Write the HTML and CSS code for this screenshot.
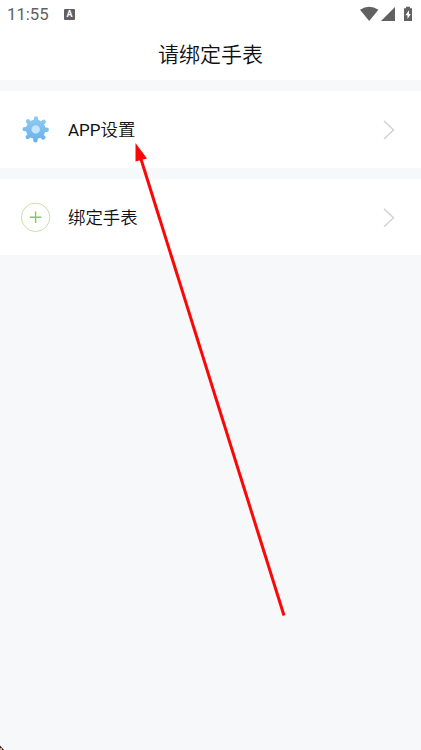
FILE: index.html
```html
<!DOCTYPE html>
<html lang="zh-CN">
<head>
<meta charset="utf-8">
<title>请绑定手表</title>
<link rel="stylesheet" href="styles.css">
</head>
<body>
<header class="header">
  <div class="status">
    <span class="time">11:55</span>
    <span class="badge">A</span>
    <svg class="system" width="54" height="16" viewBox="0 0 54 16" fill="#616161">
      <path d="M0 3.8Q9.2-2.5 18.4 3.8L9.2 15Z"/>
      <path d="M21 15H35V1Z"/>
      <path d="M44 2.3h2V.8h4v1.5h2V15h-8z"/>
      <path d="M49 4.3l-3.5 5h2v3.8l3.3-5.2h-1.8z" fill="#fff"/>
    </svg>
  </div>
  <h1 class="title">请绑定手表</h1>
</header>
<main class="list">
  <div class="row">
    <svg class="icon" width="30" height="30" viewBox="-14.7 -14.4 30 30">
      <defs>
        <linearGradient id="blue" gradientUnits="userSpaceOnUse" x1="0" y1="-13" x2="0" y2="13">
          <stop offset="0" stop-color="#92caf3"/><stop offset="1" stop-color="#68b0e9"/>
        </linearGradient>
      </defs>
      <g fill="url(#blue)" stroke="url(#blue)">
        <circle r="9.8" stroke="none"/>
        <path stroke-width="4.4" stroke-linecap="round" d="M.3-11L-.3 11M-11-.3L11 .3M-7.6-8L7.6 8M8-7.6L-8 7.6"/>
      </g>
      <circle r="4.2" fill="#c4e5fb"/>
    </svg>
    <span class="label"><span class="latin">APP</span>设置</span>
    <svg class="chevron" width="12" height="20" viewBox="0 0 12 20"><path d="M1 1l9.5 9L1 19"/></svg>
  </div>
  <div class="row second">
    <svg class="icon" width="30" height="30" viewBox="-14.6 -15.3 30 30" fill="none">
      <circle r="14.2" stroke="#b5d991" stroke-width=".8"/>
      <path d="M-5.8 0H5.8M0-5.8V5.8" stroke="#8bc751" stroke-width="1.4"/>
    </svg>
    <span class="label">绑定手表</span>
    <svg class="chevron" width="12" height="20" viewBox="0 -.7 12 20"><path d="M1 1l9.5 9L1 19"/></svg>
  </div>
</main>
<svg class="pointer" width="421" height="750" viewBox="0 0 421 750">
  <path d="M140 156L284 615.5" stroke="#fc0606" stroke-width="3"/>
  <path d="M135.5 143L147 158.5L135.5 161.5Z" fill="#fc0606"/>
  <path d="M0 745.5L4 750H0Z" fill="#2b1b18"/>
  <path d="M0 748h2v2H0Z" fill="#d8b09c"/>
</svg>
</body>
</html>
```
FILE: styles.css
```css
* { box-sizing: border-box; }
body {
  margin: 0;
  height: 750px;
  overflow: hidden;
  position: relative;
  background: #f6f8fa;
  color: #111;
  font-family: "Noto Sans CJK SC", sans-serif;
}
.header { height: 80px; background: #fff; }
.status { height: 29px; padding: 0 7px; display: flex; align-items: center; }
.time { width: 57px; font: 16.7px/29px Roboto, sans-serif; color: #616161; }
.badge {
  width: 11px; height: 11px; margin-top: -1px;
  border-radius: 1px;
  background: #616161; color: #fff;
  font: bold 9px/11px Roboto, sans-serif;
  text-align: center;
}
.system { margin-left: auto; margin-top: -1px; }
.title {
  margin: 0;
  font-size: 21px; line-height: 48px;
  font-weight: 350;
  text-align: center;
}
.list { display: flex; flex-direction: column; gap: 11px; margin-top: 11px; }
.row {
  height: 77px;
  padding: 0 26px 0 21px;
  display: flex; align-items: center;
  background: #fff;
}
.row.second { height: 76px; }
.label { margin-left: 17px; font-size: 17.4px; line-height: 26px; font-weight: 350; }
.latin { font-family: Roboto, sans-serif; font-size: 17px; font-weight: 400; }
.chevron { margin-left: auto; fill: none; stroke: #d2d2d2; stroke-width: 1.5; }
.pointer { position: absolute; left: 0; top: 0; pointer-events: none; }
```
